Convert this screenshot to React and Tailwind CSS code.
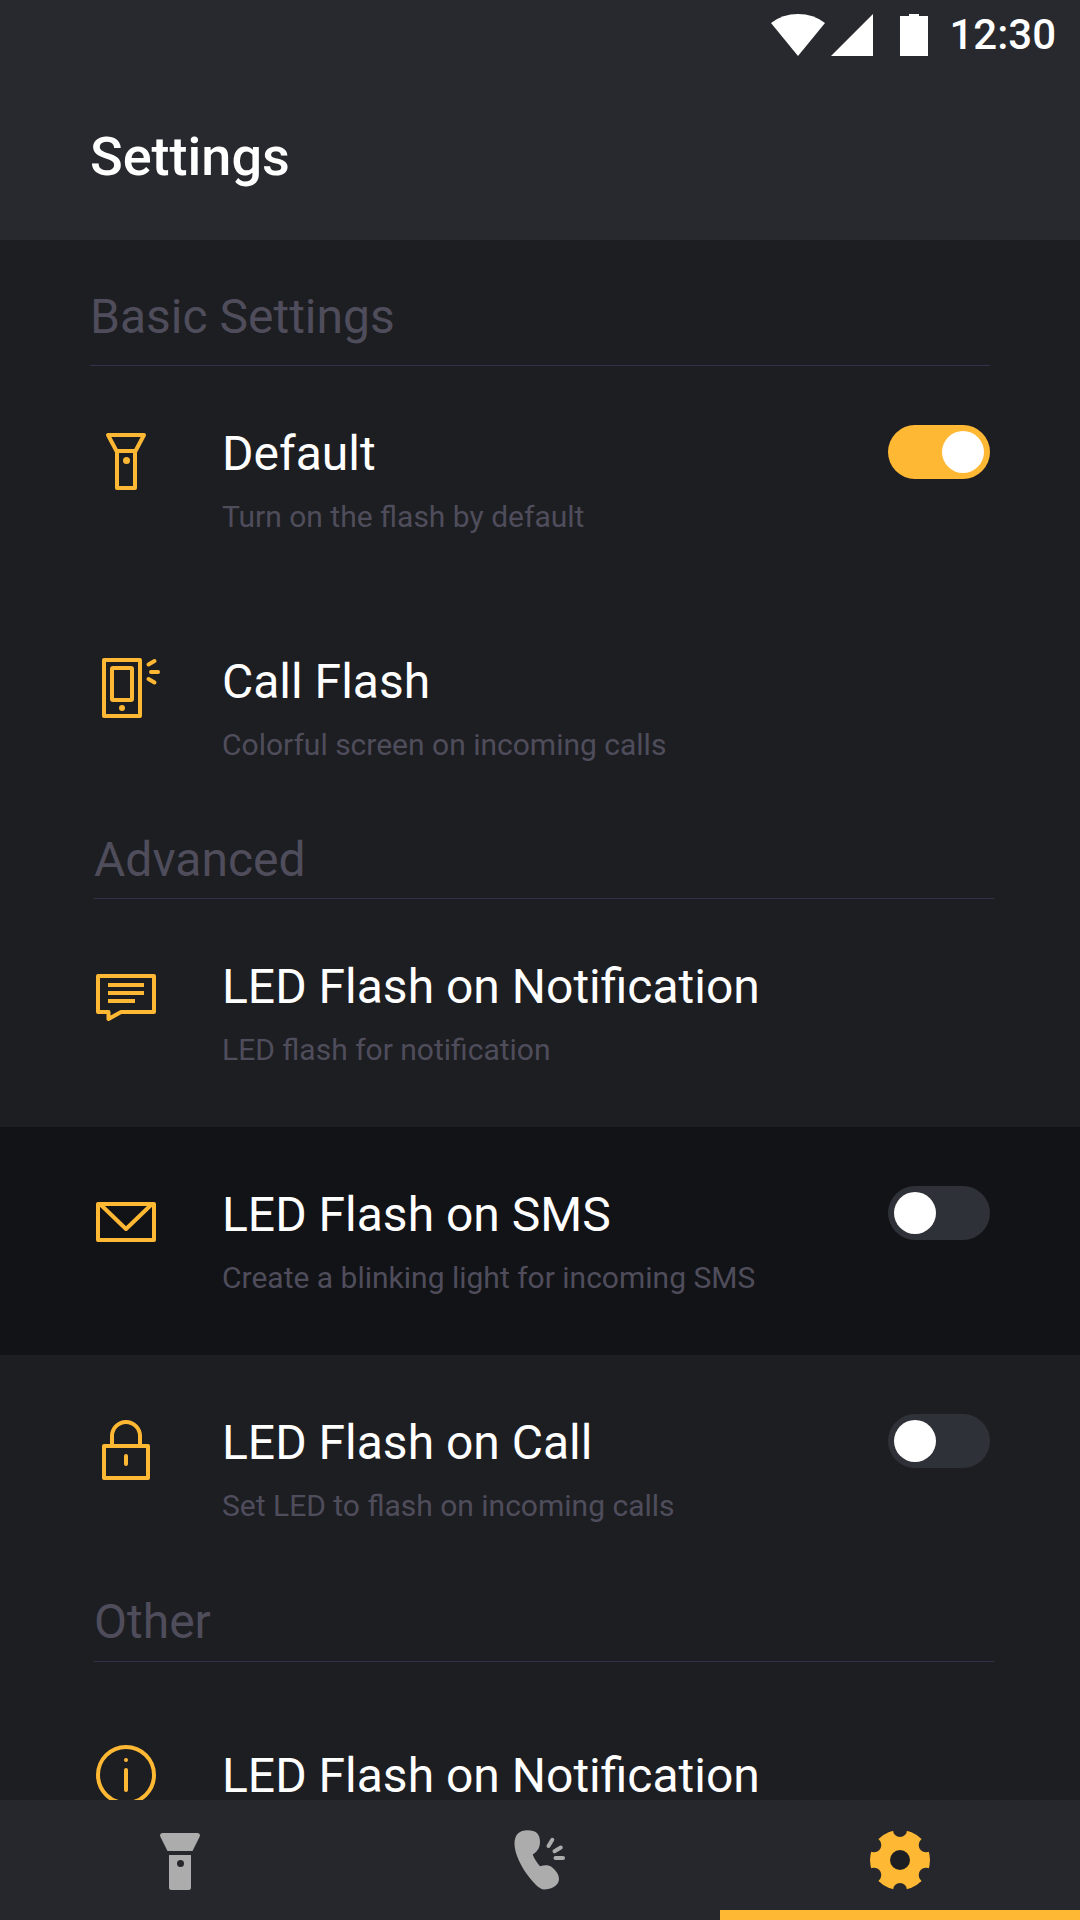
import { useState } from "react";

function FlashlightIcon() {
  return (
    <svg viewBox="0 0 60 70" className="h-[70px] w-[60px]" fill="none" stroke="#ffb833" strokeWidth="4" strokeLinejoin="round" aria-hidden="true">
      <path d="M12 13H48L39.5 29H20.500Z" />
      <path d="M21 29H39V66H21Z" />
      <circle cx="30.500" cy="38.500" r="3.500" fill="#ffb833" stroke="none" />
    </svg>
  );
}

function CallFlashIcon() {
  return (
    <svg viewBox="0 0 60 70" className="h-[70px] w-[60px] overflow-visible" fill="none" stroke="#ffb833" strokeWidth="4" strokeLinejoin="round" strokeLinecap="round" aria-hidden="true">
      <path d="M8 10H44V66H8Z" />
      <rect x="16" y="18" width="20" height="32" rx="1" />
      <circle cx="26" cy="58" r="3" fill="#ffb833" stroke="none" />
      <path d="M52.500 14.500L58.500 11M55 22H62M52.500 29L58.500 32.500" />
    </svg>
  );
}

function MessageIcon() {
  return (
    <svg viewBox="0 0 60 70" className="h-[70px] w-[60px]" fill="none" stroke="#ffb833" strokeWidth="4" strokeLinejoin="round" aria-hidden="true">
      <path d="M2 21H58V57H25L12.500 64V57H2Z" />
      <path d="M12 30H48M12 38H48M12 46H39" />
    </svg>
  );
}

function MailIcon() {
  return (
    <svg viewBox="0 0 60 70" className="h-[70px] w-[60px]" fill="none" stroke="#ffb833" strokeWidth="4" strokeLinejoin="round" aria-hidden="true">
      <path d="M2 21H58V57H2Z" />
      <path d="M5 22L30 46L55 22" />
    </svg>
  );
}

function LockIcon() {
  return (
    <svg viewBox="0 0 60 70" className="h-[70px] w-[60px]" fill="none" stroke="#ffb833" strokeWidth="4" strokeLinejoin="round" aria-hidden="true">
      <path d="M8 35H52V67H8Z" />
      <path d="M16 35V25A14 14 0 0 1 30 11A14 14 0 0 1 44 25V35" />
      <path d="M30 45V53" strokeLinecap="round" />
    </svg>
  );
}

function InfoIcon() {
  return (
    <svg viewBox="0 0 60 70" className="h-[70px] w-[60px]" fill="none" stroke="#ffb833" strokeWidth="4" strokeLinecap="round" aria-hidden="true">
      <circle cx="30" cy="31" r="28" />
      <path d="M30 26V46" />
      <circle cx="30" cy="16" r="2" fill="#ffb833" stroke="none" />
    </svg>
  );
}

function Switch({ id, defaultChecked }) {
  return (
    <input
      id={id}
      type="checkbox"
      role="switch"
      defaultChecked={defaultChecked}
      className="mt-[59px] h-[54px] w-[102px] shrink-0 cursor-pointer appearance-none rounded-full bg-[#2f3138] p-1.5 before:block before:size-[42px] before:rounded-full before:bg-white before:content-[''] checked:bg-[#ffb833] checked:before:ml-auto"
    />
  );
}

function Row({ id, icon: Icon, title, note, toggle, active }) {
  const text = (
    <>
      <span className="block text-[48px] leading-[56px] text-white">{title}</span>
      {note && <span className="mt-[17px] block text-[30px] leading-9 text-[#4f4d5b]">{note}</span>}
    </>
  );
  const shell = "flex min-h-[228px] w-full shrink-0 items-start pl-24 pr-[90px] text-left";
  const body = (
    <>
      <span className="mr-[66px] mt-14 block shrink-0"><Icon /></span>
      {toggle ? (
        <label htmlFor={id} className="mt-[60px] min-w-0 flex-1">{text}</label>
      ) : (
        <span className="mt-[60px] min-w-0 flex-1">{text}</span>
      )}
      {toggle && <Switch id={id} defaultChecked={toggle === "on"} />}
    </>
  );
  if (toggle) {
    return <div className={`${shell} ${active ? "bg-[#121317]" : ""}`}>{body}</div>;
  }
  return <button type="button" className={shell}>{body}</button>;
}

function Navigation() {
  const [tab, setTab] = useState("settings");
  const tabs = [
    {
      id: "light",
      label: "Flashlight",
      icon: (
        <svg viewBox="0 0 60 60" className="size-[60px] fill-current" aria-hidden="true">
          <path d="M12.500 3H47.500Q51 3.500 49.500 7L42.500 21H17.500L10.500 7Q9 3.500 12.500 3Z" />
          <path fillRule="evenodd" d="M19 25H41V57.500Q41 60 38.500 60H21.500Q19 60 19 57.500ZM30.500 30A3.500 3.500 0 1 0 30.500 37A3.500 3.500 0 1 0 30.500 30Z" />
        </svg>
      ),
    },
    {
      id: "call",
      label: "Call flash",
      icon: (
        <svg viewBox="0 0 60 60" className="size-[60px]" aria-hidden="true">
          <path fill="currentColor" d="M4.500 14C4.500 6 8 .3 17.500 .3C26 .3 30 4 30 12C30 18.500 26.500 22 22.700 24.500C24 28.500 27 32.500 30 36.300C34 35 37.500 34.500 41 36.500C45.500 40 49 44 49 49C49 55.500 41 59.500 34 59.500C30 59.500 25 54.500 20 48.300C11 37.500 4.500 23 4.500 14Z" />
          <path fill="none" stroke="currentColor" strokeWidth="4" strokeLinecap="round" d="M42.300 9.800L38.500 16M50.800 17.500L44.500 21.300M45.500 28H53" />
        </svg>
      ),
    },
    {
      id: "settings",
      label: "Settings",
      icon: (
        <svg viewBox="0 0 60 60" className="size-[60px]" aria-hidden="true">
          <mask id="gear-notches">
            <rect width="60" height="60" fill="white" />
            <circle cx="30" cy="0" r="7" />
            <circle cx="56" cy="15" r="7.300" />
            <circle cx="56" cy="45" r="7.300" />
            <circle cx="30" cy="60" r="7" />
            <circle cx="4" cy="45" r="7.300" />
            <circle cx="4" cy="15" r="7.300" />
          </mask>
          <circle cx="30" cy="30" r="30" fill="currentColor" mask="url(#gear-notches)" />
          <circle cx="30" cy="30" r="10" fill="#1d1e22" />
        </svg>
      ),
    },
  ];
  return (
    <nav className="grid h-[120px] shrink-0 grid-cols-3 bg-[#26272c]">
      {tabs.map((t) => (
        <button
          key={t.id}
          type="button"
          aria-label={t.label}
          aria-current={tab === t.id ? "page" : undefined}
          onClick={() => setTab(t.id)}
          className={`flex flex-col items-center justify-between pt-[30px] ${tab === t.id ? "text-[#ffb833]" : "text-[#acacac]"}`}
        >
          {t.icon}
          <span className={`h-2.5 w-full ${tab === t.id ? "bg-[#ffb833]" : ""}`} />
        </button>
      ))}
    </nav>
  );
}

export default function App() {
  return (
    <div className="flex h-screen flex-col bg-[#1d1e22] font-['Roboto',sans-serif]">
      <header className="h-60 shrink-0 bg-[#28292e] text-white">
        <div className="flex h-[70px] items-center justify-end pr-6">
          <svg viewBox="0 0 54 42" className="h-[42px] w-[54px] fill-current" aria-label="Wi-Fi">
            <path d="M27 42L0 9Q11.500 0 27 0T54 9Z" />
          </svg>
          <svg viewBox="0 0 42 42" className="ml-1.5 size-[42px] fill-current" aria-label="Signal">
            <path d="M0 42L42 0V42Z" />
          </svg>
          <svg viewBox="0 0 28 42" className="ml-[27px] h-[42px] w-7 fill-current" aria-label="Battery">
            <path d="M9 0H19V2H28V42H0V2H9Z" />
          </svg>
          <span className="ml-[21px] text-[42px] font-medium leading-[56px]">12:30</span>
        </div>
        <h1 className="mt-[55px] px-[90px] text-[54px] font-medium leading-[64px]">Settings</h1>
      </header>

      <main className="flex min-h-0 flex-1 flex-col overflow-y-auto [scrollbar-width:none]">
        <h2 className="mx-[90px] h-[126px] shrink-0 border-b border-[#33304f] pt-[49px] text-[48px] leading-[56px] text-[#4f4d5b]">Basic Settings</h2>
        <Row id="default" icon={FlashlightIcon} title="Default" note="Turn on the flash by default" toggle="on" />
        <Row icon={CallFlashIcon} title="Call Flash" note="Colorful screen on incoming calls" />

        <h2 className="ml-[94px] mr-[86px] h-[77px] shrink-0 border-b border-[#33304f] pt-2.5 text-[48px] leading-[56px] text-[#4f4d5b]">Advanced</h2>
        <Row icon={MessageIcon} title="LED Flash on Notification" note="LED flash for notification" />
        <Row id="sms" icon={MailIcon} title="LED Flash on SMS" note="Create a blinking light for incoming SMS" toggle="off" active />
        <Row id="call" icon={LockIcon} title="LED Flash on Call" note="Set LED to flash on incoming calls" toggle="off" />

        <h2 className="mb-[26px] ml-[94px] mr-[86px] h-[79px] shrink-0 border-b border-[#33304f] pt-[11px] text-[48px] leading-[56px] text-[#4f4d5b]">Other</h2>
        <Row icon={InfoIcon} title="LED Flash on Notification" />
      </main>

      <Navigation />
    </div>
  );
}
